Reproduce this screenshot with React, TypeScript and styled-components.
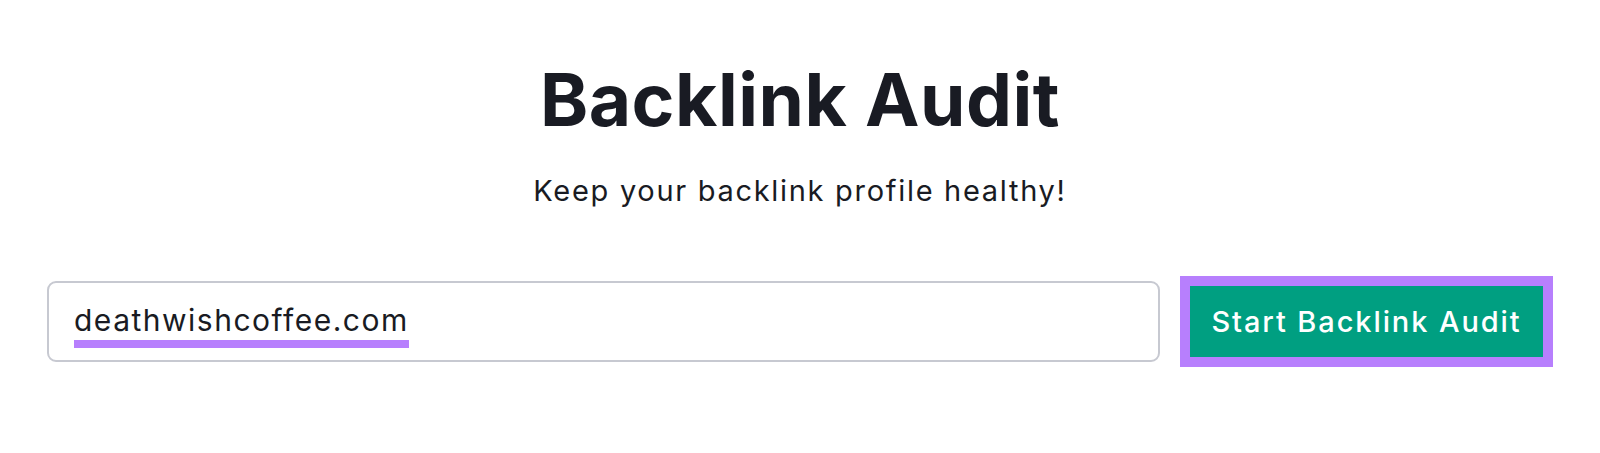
import React from 'react'
import styled, {createGlobalStyle} from 'styled-components'

const GlobalStyle = createGlobalStyle`
  html, body {
    margin: 0;
    padding: 0;
    background: #ffffff;
    font-family: Inter, 'Noto Sans', sans-serif;
  }
`

const Page = styled.div`
  width: 1600px;
  height: 453px;
  display: flex;
  flex-direction: column;
  align-items: center;
  padding-top: 48px;
  box-sizing: border-box;
`

const Title = styled.h1`
  margin: 0;
  font-size: 73px;
  font-weight: 700;
  line-height: 104px;
  color: #191b23;
  letter-spacing: 0.5px;
`

const Subtitle = styled.p`
  margin: 19px 0 0;
  font-size: 29px;
  font-weight: 400;
  line-height: 40px;
  color: #191b23;
  letter-spacing: 1.7px;
`

const SearchRow = styled.div`
  display: flex;
  align-items: center;
  gap: 20px;
  margin-top: 65px;
`

const Field = styled.div`
  width: 1113px;
  height: 81px;
  box-sizing: border-box;
  border: 2px solid #c7c9d1;
  border-radius: 9px;
  display: flex;
  align-items: center;
  padding-left: 25px;
  background: #fff;
`

const Domain = styled.span`
  font-size: 30px;
  line-height: 36px;
  color: #191b23;
  letter-spacing: 1.5px;
  border-bottom: 8px solid #b77ffd;
  padding-bottom: 2px;
  margin-top: 7px;
`

const Highlight = styled.div`
  border: 10px solid #b77ffd;
`

const Button = styled.button`
  width: 353px;
  height: 71px;
  border: none;
  margin: 0;
  padding: 0;
  background: #009f81;
  color: #ffffff;
  font-family: Inter, 'Noto Sans', sans-serif;
  font-size: 29px;
  font-weight: 500;
  letter-spacing: 1.9px;
  display: flex;
  align-items: center;
  justify-content: center;
  cursor: pointer;
`

const App = () => {
  return (
    <>
      <GlobalStyle />
      <Page>
        <Title>Backlink Audit</Title>
        <Subtitle>Keep your backlink profile healthy!</Subtitle>
        <SearchRow>
          <Field>
            <Domain>deathwishcoffee.com</Domain>
          </Field>
          <Highlight>
            <Button>Start Backlink Audit</Button>
          </Highlight>
        </SearchRow>
      </Page>
    </>
  )
}

export default App
